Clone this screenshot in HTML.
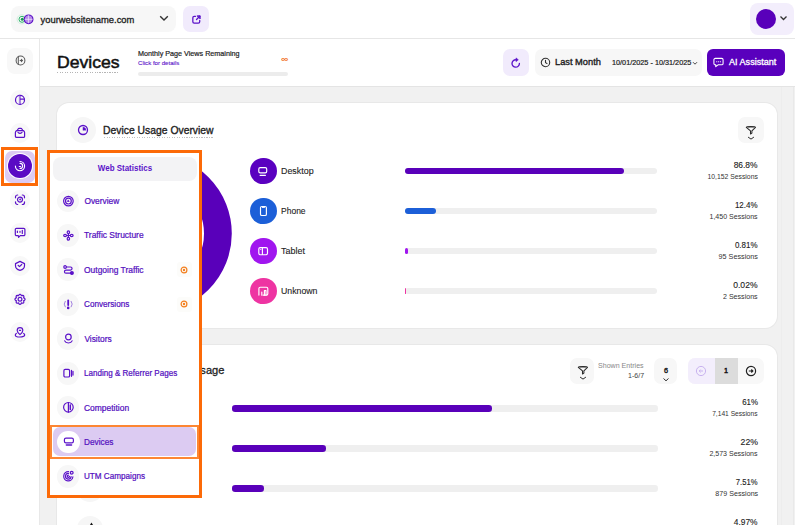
<!DOCTYPE html>
<html><head><meta charset="utf-8">
<style>
*{margin:0;padding:0;box-sizing:border-box}
html,body{width:795px;height:525px;overflow:hidden;background:#fff;font-family:"Liberation Sans",sans-serif;color:#222}
.a{position:absolute}
.t{white-space:nowrap}
svg{display:block}
</style></head><body>
<div class="a" style="left:0px;top:0px;width:795px;height:39px;background:#fff;border-radius:0px;border-bottom:1px solid #e6e6e6"></div>
<div class="a" style="left:11px;top:6px;width:165px;height:26px;background:#f7f7f7;border-radius:8px;"></div>
<svg class="a" style="left:14px;top:12px" width="22" height="15" viewBox="0 0 22 15"><circle cx="7.7" cy="7.3" r="4.6" fill="none" stroke="#d3efdf" stroke-width="1"/><circle cx="8" cy="7.3" r="3" fill="none" stroke="#2db56c" stroke-width="1"/><circle cx="8.3" cy="7.2" r="1.5" fill="#12994c"/><circle cx="14.6" cy="7.3" r="4.3" fill="#b58ae8" stroke="#5a0fc6" stroke-width="1.2"/><path d="M14.4 3.3v8M10.6 7.3h8" stroke="#eee4fb" stroke-width=".8"/></svg>
<div class="a t" style="left:40.60px;top:15.00px;font-size:9.4px;line-height:9.4px;font-weight:normal;color:#222;-webkit-text-stroke:0.3px #222;">yourwebsitename.com</div>
<svg class="a" style="left:158px;top:14px" width="12" height="9" viewBox="0 0 12 9"><path d="M2.2 2.2l3.8 3.8 3.8-3.8" fill="none" stroke="#333" stroke-width="1.4"/></svg>
<div class="a" style="left:183px;top:6px;width:26px;height:26px;background:#f1ebfc;border-radius:7px;"></div>
<svg class="a" style="left:190.5px;top:13.5px" width="11" height="11" viewBox="0 0 12 12" fill="none" stroke="#5b12c9" stroke-width="1.4" stroke-linecap="round" stroke-linejoin="round"><path d="M5 2.5H3.5a1.5 1.5 0 0 0-1.5 1.5v4.5A1.5 1.5 0 0 0 3.5 10H8a1.5 1.5 0 0 0 1.5-1.5V7M6 6l3.6-3.6"/><path d="M7 2h3v3z" fill="#5b12c9" stroke-width="1"/></svg>
<div class="a" style="left:750px;top:3px;width:44px;height:32px;background:#f3eefc;border-radius:8px;"></div>
<div class="a" style="left:756px;top:9px;width:20px;height:20px;background:#5900ba;border-radius:10px;"></div>
<svg class="a" style="left:779px;top:15px" width="9" height="7" viewBox="0 0 9 7"><path d="M1.5 1.5l3 3 3-3" fill="none" stroke="#333" stroke-width="1.3"/></svg>
<div class="a" style="left:0px;top:39px;width:40px;height:486px;background:#fff;border-radius:0px;border-right:1px solid #e8e8e8"></div>
<div class="a" style="left:7px;top:48px;width:26px;height:26px;background:#f8f8f8;border-radius:8px;"></div>
<svg class="a" style="left:14.5px;top:55.0px" width="11" height="11" viewBox="0 0 12 12" fill="none" stroke="#555" stroke-width="1.1" stroke-linecap="round" stroke-linejoin="round"><circle cx="6" cy="6" r="4.8"/><path d="M3.6 1.8v8.4M5.6 6h2.6M6.9 4.7L8.2 6 6.9 7.3"/></svg>
<div class="a" style="left:10px;top:90px;width:20px;height:20px;background:#f8f8f8;border-radius:10px;"></div>
<svg class="a" style="left:11px;top:91px" width="18" height="18" viewBox="0 0 18 18" fill="none" stroke="#5b12c9" stroke-width="1.2" stroke-linecap="round" stroke-linejoin="round"><circle cx="9" cy="8.9" r="4.5"/><path d="M8.9 4.4v9M8.9 8.2h4.5"/><path d="M8.3 5v7.8" stroke-width=".8" stroke="#b9a0ea"/></svg>
<div class="a" style="left:10px;top:122.6px;width:20px;height:20px;background:#f8f8f8;border-radius:10px;"></div>
<svg class="a" style="left:11px;top:124px" width="18" height="18" viewBox="0 0 18 18" fill="none" stroke="#5b12c9" stroke-width="1.2" stroke-linecap="round" stroke-linejoin="round"><path d="M4.4 8.6v3.6a1.1 1.1 0 0 0 1.1 1.1h7a1.1 1.1 0 0 0 1.1-1.1V8.6c0-1-.6-1.7-1.4-2H5.8c-.8.3-1.4 1-1.4 2z"/><path d="M6.2 6.6l1-1.8a.9.9 0 0 1 .8-.5h2a.9.9 0 0 1 .8.5l1 1.8"/><path d="M7 8.3q2 2 4 0"/></svg>
<div class="a" style="left:10px;top:189.6px;width:20px;height:20px;background:#f8f8f8;border-radius:10px;"></div>
<svg class="a" style="left:11px;top:191px" width="18" height="18" viewBox="0 0 18 18" fill="none" stroke="#5b12c9" stroke-width="1.2" stroke-linecap="round" stroke-linejoin="round"><path d="M4.5 6.8V6a2 2 0 0 1 2-2h.2M11.3 4h.2a2 2 0 0 1 2 2v.8M13.5 10.8v.7a2 2 0 0 1-2 2h-.2M6.7 13.5h-.2a2 2 0 0 1-2-2v-.7"/><circle cx="9" cy="8.6" r="2.5"/><circle cx="9.2" cy="8.4" r=".35" fill="#5b12c9"/></svg>
<div class="a" style="left:10px;top:222.5px;width:20px;height:20px;background:#f8f8f8;border-radius:10px;"></div>
<svg class="a" style="left:11px;top:224px" width="18" height="18" viewBox="0 0 18 18" fill="none" stroke="#5b12c9" stroke-width="1.2" stroke-linecap="round" stroke-linejoin="round"><path d="M5.5 4.3h7.2a1.2 1.2 0 0 1 1.2 1.2v5a1.2 1.2 0 0 1-1.2 1.2H9.2l-1.6 1.6-.3-1.6H5.5a1.2 1.2 0 0 1-1.2-1.2v-5a1.2 1.2 0 0 1 1.2-1.2z"/><path d="M6.4 7.2v1.2M9 7.4v.9M11.3 6.3v3.2"/></svg>
<div class="a" style="left:10px;top:255.5px;width:20px;height:20px;background:#f8f8f8;border-radius:10px;"></div>
<svg class="a" style="left:11px;top:257px" width="18" height="18" viewBox="0 0 18 18" fill="none" stroke="#5b12c9" stroke-width="1.2" stroke-linecap="round" stroke-linejoin="round"><path d="M9 4.4l4.5 2.2v2.2c0 2.3-2 4-4.5 4.5-2.5-.5-4.5-2.2-4.5-4.5V6.6z"/><path d="M7.1 8.3l1.4 1.3 2.2-2.1"/></svg>
<div class="a" style="left:10px;top:289px;width:20px;height:20px;background:#f8f8f8;border-radius:10px;"></div>
<svg class="a" style="left:11px;top:290px" width="18" height="18" viewBox="0 0 18 18" fill="none" stroke="#5b12c9" stroke-width="1.2" stroke-linecap="round" stroke-linejoin="round"><circle cx="9" cy="9.3" r="1.9"/><path d="M9.00 4.20 L9.92 4.69 L10.49 5.70 L11.61 5.39 L12.61 5.69 L12.91 6.69 L12.60 7.81 L13.61 8.38 L14.10 9.30 L13.61 10.22 L12.60 10.79 L12.91 11.91 L12.61 12.91 L11.61 13.21 L10.49 12.90 L9.92 13.91 L9.00 14.40 L8.08 13.91 L7.51 12.90 L6.39 13.21 L5.39 12.91 L5.09 11.91 L5.40 10.79 L4.39 10.22 L3.90 9.30 L4.39 8.38 L5.40 7.81 L5.09 6.69 L5.39 5.69 L6.39 5.39 L7.51 5.70 L8.08 4.69z"/></svg>
<div class="a" style="left:10px;top:322px;width:20px;height:20px;background:#f8f8f8;border-radius:10px;"></div>
<svg class="a" style="left:11px;top:323px" width="18" height="18" viewBox="0 0 18 18" fill="none" stroke="#5b12c9" stroke-width="1.2" stroke-linecap="round" stroke-linejoin="round"><path d="M9 11.6c-1.8-1.5-2.8-2.8-2.8-4.1a2.8 2.8 0 0 1 5.6 0c0 1.3-1 2.6-2.8 4.1z"/><path d="M8.4 7.3h1.2"/><path d="M5.3 10.4c-.7.5-1 1-1 1.5 0 1.2 2.1 2.1 4.7 2.1s4.7-.9 4.7-2.1c0-.5-.3-1-1-1.5"/></svg>
<div class="a" style="left:1px;top:147px;width:37px;height:38.5px;border:3px solid #fc6a08"></div>
<div class="a" style="left:5px;top:150.5px;width:30px;height:32px;background:#dccbf2;border-radius:7px;"></div>
<div class="a" style="left:7.5px;top:153.8px;width:24.6px;height:24.6px;border-radius:50%;background:#5a0bc4;box-shadow:0 0 0 1px #fff"></div>
<svg class="a" style="left:11px;top:157px" width="18" height="18" viewBox="0 0 18 18" fill="none" stroke="#fff" stroke-width="1.15" stroke-linecap="round" stroke-linejoin="round"><path d="M9 4.5a4.6 4.6 0 1 1-4.6 4.6"/><path d="M9.1 6.4a2.5 2.5 0 0 1 0 5"/><path d="M8.3 9.5h1.2"/></svg>
<div class="a" style="left:40px;top:39px;width:755px;height:48px;background:#fff;border-radius:0px;border-bottom:1px solid #e4e4e4"></div>
<div class="a t" style="left:56.60px;top:55.00px;font-size:16.8px;line-height:16.8px;font-weight:normal;color:#111;transform:scaleX(1.0488);transform-origin:left;-webkit-text-stroke:0.5px #111;">Devices</div>
<div class="a" style="left:57px;top:72px;width:62px;height:1px;background:repeating-linear-gradient(90deg,#b5b5b5 0 1px,transparent 1px 2.5px)"></div>
<div class="a t" style="left:137.60px;top:50.00px;font-size:7.4px;line-height:7.4px;font-weight:normal;color:#222;transform:scaleX(0.9749);transform-origin:left;-webkit-text-stroke:0.2px #222;">Monthly Page Views Remaining</div>
<div class="a t" style="left:137.60px;top:60.00px;font-size:6.2px;line-height:6.2px;font-weight:normal;color:#5b12c9;transform:scaleX(0.9844);transform-origin:left;-webkit-text-stroke:0.1px #5b12c9;">Click for details</div>
<div class="a t" style="left:280.60px;top:55.00px;font-size:9px;line-height:9px;font-weight:bold;color:#f2701e;transform:scaleX(1.1367);transform-origin:left;">&#8734;</div>
<div class="a" style="left:138px;top:72px;width:150px;height:4px;background:#ececec;border-radius:2px;"></div>
<div class="a" style="left:503px;top:49px;width:26px;height:27px;background:#f1ebfc;border-radius:7px;"></div>
<svg class="a" style="left:506px;top:53px" width="20" height="20" viewBox="0 0 20 20"><path d="M13.4 10.5A3.7 3.7 0 1 1 9.9 6.8" fill="none" stroke="#5b12c9" stroke-width="1.35" stroke-linecap="round"/><path d="M10 4.9L12.3 6.8 10 8.6z" fill="#5b12c9" stroke="#5b12c9" stroke-width=".6" stroke-linejoin="round"/></svg>
<div class="a" style="left:535px;top:49px;width:167px;height:27px;background:#f7f7f7;border-radius:7px;"></div>
<svg class="a" style="left:540.0px;top:57.0px" width="11" height="11" viewBox="0 0 12 12" fill="none" stroke="#333" stroke-width="1.2" stroke-linecap="round" stroke-linejoin="round"><circle cx="6" cy="6" r="4.6"/><path d="M6 3.5v2.6l1.6 1"/></svg>
<div class="a t" style="left:555.30px;top:58.00px;font-size:9px;line-height:9px;font-weight:normal;color:#222;transform:scaleX(1.0307);transform-origin:left;-webkit-text-stroke:0.35px #222;">Last Month</div>
<div class="a t" style="left:611.90px;top:59.00px;font-size:7.2px;line-height:7.2px;font-weight:normal;color:#222;transform:scaleX(1.0122);transform-origin:left;-webkit-text-stroke:0.2px #222;">10/01/2025 - 10/31/2025</div>
<svg class="a" style="left:692px;top:61px" width="6" height="5" viewBox="0 0 6 5"><path d="M1 1.2l2 2 2-2" fill="none" stroke="#333" stroke-width="0.9"/></svg>
<div class="a" style="left:707px;top:49px;width:78px;height:26.5px;background:#5900bd;border-radius:6px;"></div>
<svg class="a" style="left:712.9px;top:57.1px" width="11" height="11" viewBox="0 0 12 12" fill="none" stroke="#fff" stroke-width="1.15" stroke-linecap="round" stroke-linejoin="round"><path d="M2.5 1.5h7a1.5 1.5 0 0 1 1.5 1.5v4A1.5 1.5 0 0 1 9.5 8.5H5.5L3 10.5v-2h-.5A1.5 1.5 0 0 1 1 7V3a1.5 1.5 0 0 1 1.5-1.5z"/><path d="M4 5.2h.2M6 5.2h.2M8 5.2h.2"/></svg>
<div class="a t" style="left:729.00px;top:58.00px;font-size:8.7px;line-height:8.7px;font-weight:normal;color:#fff;transform:scaleX(1.0421);transform-origin:left;-webkit-text-stroke:0.3px #fff;">AI Assistant</div>
<div class="a" style="left:40px;top:87px;width:755px;height:438px;background:#f1f1f1;border-radius:0px;"></div>
<div class="a" style="left:780.5px;top:87px;width:1px;height:438px;background:#ededed;border-radius:0px;"></div>
<div class="a" style="left:793px;top:87px;width:1px;height:438px;background:#e9e9e9;border-radius:0px;"></div>
<div class="a" style="left:57px;top:103px;width:720px;height:225px;background:#fff;border-radius:12px;box-shadow:0 0 0 1px #e8e8e8"></div>
<div class="a" style="left:70px;top:117px;width:26px;height:26px;background:#f6f6f6;border-radius:13px;"></div>
<svg class="a" style="left:77.4px;top:124.0px" width="12" height="12" viewBox="0 0 12 12" fill="none" stroke="#5b12c9" stroke-width="1.3" stroke-linecap="round" stroke-linejoin="round"><circle cx="6" cy="6" r="4.5"/><path d="M6 6V3.2a2.8 2.8 0 0 1 2.8 2.8z" fill="#5b12c9" stroke-width=".5"/></svg>
<div class="a t" style="left:103.20px;top:125.00px;font-size:11.1px;line-height:11.1px;font-weight:normal;color:#222;transform:scaleX(0.9343);transform-origin:left;-webkit-text-stroke:0.35px #222;">Device Usage Overview</div>
<div class="a" style="left:104px;top:137px;width:110px;height:1px;background:repeating-linear-gradient(90deg,#c0c0c0 0 1px,transparent 1px 2.5px)"></div>
<div class="a" style="left:738px;top:117px;width:26px;height:26px;background:#f7f7f7;border-radius:7px;"></div>
<svg class="a" style="left:742px;top:121px" width="18" height="20" viewBox="0 0 18 20" fill="none" stroke="#2a2a2a" stroke-width="1.2" stroke-linecap="round" stroke-linejoin="round"><ellipse cx="8.9" cy="6.2" rx="3.4" ry=".9" fill="#9a9a9a" stroke="none"/><path d="M4.3 6.3c0-1.2 9.2-1.2 9.2 0L9.9 9.9v2.2l-1.4.9V9.9z" stroke-width="1.05"/><path d="M6.4 16.3L9 18.1l2.6-1.8" stroke-width="1"/></svg>
<svg class="a" style="left:57px;top:140px" width="180" height="190" viewBox="57 140 180 190"><circle cx="152.3" cy="233.5" r="65.6" fill="none" stroke="#5900ba" stroke-width="27.8"/></svg>
<div class="a" style="left:250px;top:157.7px;width:26.7px;height:26.7px;background:#5a00c0;border-radius:14px;"></div>
<svg class="a" style="left:248px;top:156px" width="30" height="30" viewBox="0 0 30 30" fill="none" stroke="#fff" stroke-width="1.15" stroke-linecap="round" stroke-linejoin="round"><rect x="10.8" y="11.6" width="7.9" height="5.2" rx="1.4"/><path d="M12.1 19.3h5.3" stroke-width="1.2"/></svg>
<div class="a t" style="left:280.80px;top:167.00px;font-size:8.4px;line-height:8.4px;font-weight:normal;color:#222;transform:scaleX(1.0607);transform-origin:left;-webkit-text-stroke:0.1px #222;">Desktop</div>
<div class="a" style="left:405px;top:167.8px;width:252px;height:6.4px;background:#efefef;border-radius:3.2px;"></div>
<div class="a" style="left:405px;top:167.8px;width:219px;height:6.4px;background:#5900ba;border-radius:3.2px;"></div>
<div class="a t" style="left:732.27px;top:161.00px;font-size:9px;line-height:9px;font-weight:normal;color:#222;transform:scaleX(0.9361);transform-origin:right;-webkit-text-stroke:0.12px #222;">86.8%</div>
<div class="a t" style="left:700.96px;top:173.00px;font-size:7.7px;line-height:7.7px;font-weight:normal;color:#333;transform:scaleX(0.8866);transform-origin:right;">10,152 Sessions</div>
<div class="a" style="left:250px;top:197.7px;width:26.7px;height:26.7px;background:#1c5fd8;border-radius:14px;"></div>
<svg class="a" style="left:248px;top:196px" width="30" height="30" viewBox="0 0 30 30" fill="none" stroke="#fff" stroke-width="1.15" stroke-linecap="round" stroke-linejoin="round"><rect x="12.5" y="10.5" width="5.9" height="9" rx="1.3"/><path d="M14.4 11.4h2.1" stroke-width="1"/></svg>
<div class="a t" style="left:280.80px;top:207.00px;font-size:8.4px;line-height:8.4px;font-weight:normal;color:#222;transform:scaleX(1.0157);transform-origin:left;-webkit-text-stroke:0.1px #222;">Phone</div>
<div class="a" style="left:405px;top:207.8px;width:252px;height:6.4px;background:#efefef;border-radius:3.2px;"></div>
<div class="a" style="left:405px;top:207.8px;width:31px;height:6.4px;background:#1c5fd8;border-radius:3.2px;"></div>
<div class="a t" style="left:732.27px;top:201.00px;font-size:9px;line-height:9px;font-weight:normal;color:#222;transform:scaleX(0.8852);transform-origin:right;-webkit-text-stroke:0.12px #222;">12.4%</div>
<div class="a t" style="left:705.22px;top:213.00px;font-size:7.7px;line-height:7.7px;font-weight:normal;color:#333;transform:scaleX(0.9148);transform-origin:right;">1,450 Sessions</div>
<div class="a" style="left:250px;top:237.7px;width:26.7px;height:26.7px;background:#a016ef;border-radius:14px;"></div>
<svg class="a" style="left:248px;top:236px" width="30" height="30" viewBox="0 0 30 30" fill="none" stroke="#fff" stroke-width="1.15" stroke-linecap="round" stroke-linejoin="round"><rect x="10.8" y="11.6" width="8.7" height="7.1" rx="1.4"/><path d="M14.4 12v6.3"/><path d="M12.8 13.3v.1" stroke-width="1.1"/></svg>
<div class="a t" style="left:280.80px;top:247.00px;font-size:8.4px;line-height:8.4px;font-weight:normal;color:#222;transform:scaleX(1.0689);transform-origin:left;-webkit-text-stroke:0.1px #222;">Tablet</div>
<div class="a" style="left:405px;top:247.8px;width:252px;height:6.4px;background:#efefef;border-radius:3.2px;"></div>
<div class="a" style="left:405px;top:247.8px;width:3px;height:6.4px;background:#a016ef;border-radius:3.2px;"></div>
<div class="a t" style="left:732.27px;top:241.00px;font-size:9px;line-height:9px;font-weight:normal;color:#222;transform:scaleX(0.8852);transform-origin:right;-webkit-text-stroke:0.12px #222;">0.81%</div>
<div class="a t" style="left:715.91px;top:253.00px;font-size:7.7px;line-height:7.7px;font-weight:normal;color:#333;transform:scaleX(0.9382);transform-origin:right;">95 Sessions</div>
<div class="a" style="left:250px;top:277.7px;width:26.7px;height:26.7px;background:#ee34a2;border-radius:14px;"></div>
<svg class="a" style="left:248px;top:276px" width="30" height="30" viewBox="0 0 30 30" fill="none" stroke="#fff" stroke-width="1.15" stroke-linecap="round" stroke-linejoin="round"><path d="M10.9 19.1V12.6a1.4 1.4 0 0 1 1.4-1.4h6.1a1.4 1.4 0 0 1 1.4 1.4v5.1a1.4 1.4 0 0 1-1.4 1.4H15"/><path d="M13.8 19.2v-3.2M16.4 19.2v-4.6h1.6v4.6"/></svg>
<div class="a t" style="left:280.80px;top:287.00px;font-size:8.4px;line-height:8.4px;font-weight:normal;color:#222;transform:scaleX(1.0423);transform-origin:left;-webkit-text-stroke:0.1px #222;">Unknown</div>
<div class="a" style="left:405px;top:287.8px;width:252px;height:6.4px;background:#efefef;border-radius:3.2px;"></div>
<div class="a" style="left:405px;top:287.8px;width:1px;height:6.4px;background:#ee34a2;border-radius:3.2px;"></div>
<div class="a t" style="left:732.27px;top:281.00px;font-size:9px;line-height:9px;font-weight:normal;color:#222;transform:scaleX(0.9518);transform-origin:right;-webkit-text-stroke:0.12px #222;">0.02%</div>
<div class="a t" style="left:720.19px;top:293.00px;font-size:7.7px;line-height:7.7px;font-weight:normal;color:#333;transform:scaleX(0.9200);transform-origin:right;">2 Sessions</div>
<div class="a" style="left:57px;top:345px;width:720px;height:200px;background:#fff;border-radius:12px;box-shadow:0 0 0 1px #e8e8e8"></div>
<div class="a t" style="left:111.57px;top:365.00px;font-size:11.1px;line-height:11.1px;font-weight:normal;color:#222;-webkit-text-stroke:0.3px #222;">Browser Device Usage</div>
<div class="a" style="left:570px;top:358px;width:24px;height:26px;background:#f7f7f7;border-radius:7px;"></div>
<svg class="a" style="left:573.6px;top:361.3px" width="18" height="20" viewBox="0 0 18 20" fill="none" stroke="#2a2a2a" stroke-width="1.2" stroke-linecap="round" stroke-linejoin="round"><ellipse cx="8.9" cy="6.2" rx="3.4" ry=".9" fill="#9a9a9a" stroke="none"/><path d="M4.3 6.3c0-1.2 9.2-1.2 9.2 0L9.9 9.9v2.2l-1.4.9V9.9z" stroke-width="1.05"/><path d="M6.4 16.3L9 18.1l2.6-1.8" stroke-width="1"/></svg>
<div class="a t" style="left:598.10px;top:362.00px;font-size:7px;line-height:7px;font-weight:normal;color:#888;transform:scaleX(1.0102);transform-origin:left;">Shown Entries</div>
<div class="a t" style="left:626.79px;top:372.00px;font-size:7.5px;line-height:7.5px;font-weight:normal;color:#444;transform:scaleX(0.9410);transform-origin:right;">1-6/7</div>
<div class="a" style="left:654px;top:358px;width:23px;height:26px;background:#f7f7f7;border-radius:7px;"></div>
<div class="a t" style="left:663.97px;top:367.00px;font-size:7.3px;line-height:7.3px;font-weight:normal;color:#222;-webkit-text-stroke:0.4px #222;">6</div>
<svg class="a" style="left:662px;top:377px" width="8" height="6" viewBox="0 0 8 6"><path d="M1.5 1.5l2.5 2.3 2.5-2.3" fill="none" stroke="#333" stroke-width="1"/></svg>
<div class="a" style="left:688px;top:358px;width:76px;height:26px;background:#f8f8f8;border-radius:7px;overflow:hidden"><div class="a" style="left:0;top:0;width:26.5px;height:26px;background:#f3eefc"></div><div class="a" style="left:26.5px;top:0;width:23px;height:26px;background:#dcdcdc"></div></div>
<svg class="a" style="left:695px;top:365px" width="12" height="12" viewBox="0 0 12 12"><circle cx="6" cy="6" r="4.6" fill="none" stroke="#c9b3ef" stroke-width="1"/><path d="M8 6H4.3M5.6 4.6L4.2 6l1.4 1.4" fill="none" stroke="#c9b3ef" stroke-width="1"/></svg>
<div class="a t" style="left:723.97px;top:367.00px;font-size:7.3px;line-height:7.3px;font-weight:normal;color:#111;-webkit-text-stroke:0.45px #111;">1</div>
<svg class="a" style="left:745px;top:365px" width="12" height="12" viewBox="0 0 12 12"><circle cx="6" cy="6" r="4.6" fill="none" stroke="#222" stroke-width="1.2"/><path d="M3.8 6h3.8M6.3 4.5L7.8 6 6.3 7.5" fill="none" stroke="#222" stroke-width="1.2"/></svg>
<div class="a" style="left:77px;top:395.5px;width:26px;height:26px;background:#f6f6f6;border-radius:13px;"></div>
<div class="a" style="left:232px;top:405.3px;width:426px;height:6.4px;background:#efefef;border-radius:3.2px;"></div>
<div class="a" style="left:232px;top:405.3px;width:260px;height:6.4px;background:#5900ba;border-radius:3.2px;"></div>
<div class="a t" style="left:739.78px;top:398.00px;font-size:9px;line-height:9px;font-weight:normal;color:#222;transform:scaleX(0.8770);transform-origin:right;-webkit-text-stroke:0.12px #222;">61%</div>
<div class="a t" style="left:705.22px;top:410.00px;font-size:7.7px;line-height:7.7px;font-weight:normal;color:#333;transform:scaleX(0.8635);transform-origin:right;">7,141 Sessions</div>
<div class="a" style="left:77px;top:435.5px;width:26px;height:26px;background:#f6f6f6;border-radius:13px;"></div>
<div class="a" style="left:232px;top:445.3px;width:426px;height:6.4px;background:#efefef;border-radius:3.2px;"></div>
<div class="a" style="left:232px;top:445.3px;width:94px;height:6.4px;background:#5900ba;border-radius:3.2px;"></div>
<div class="a t" style="left:739.78px;top:438.00px;font-size:9px;line-height:9px;font-weight:normal;color:#222;transform:scaleX(0.9658);transform-origin:right;-webkit-text-stroke:0.12px #222;">22%</div>
<div class="a t" style="left:705.22px;top:450.00px;font-size:7.7px;line-height:7.7px;font-weight:normal;color:#333;transform:scaleX(0.9167);transform-origin:right;">2,573 Sessions</div>
<div class="a" style="left:77px;top:475.5px;width:26px;height:26px;background:#f6f6f6;border-radius:13px;"></div>
<div class="a" style="left:232px;top:485.3px;width:426px;height:6.4px;background:#efefef;border-radius:3.2px;"></div>
<div class="a" style="left:232px;top:485.3px;width:32px;height:6.4px;background:#5900ba;border-radius:3.2px;"></div>
<div class="a t" style="left:732.27px;top:478.00px;font-size:9px;line-height:9px;font-weight:normal;color:#222;transform:scaleX(0.8499);transform-origin:right;-webkit-text-stroke:0.12px #222;">7.51%</div>
<div class="a t" style="left:711.64px;top:490.00px;font-size:7.7px;line-height:7.7px;font-weight:normal;color:#333;transform:scaleX(0.9273);transform-origin:right;">879 Sessions</div>
<div class="a" style="left:77px;top:515.5px;width:26px;height:26px;background:#f6f6f6;border-radius:13px;"></div>
<div class="a" style="left:232px;top:525.3px;width:426px;height:6.4px;background:#efefef;border-radius:3.2px;"></div>
<div class="a" style="left:232px;top:525.3px;width:21px;height:6.4px;background:#5900ba;border-radius:3.2px;"></div>
<div class="a t" style="left:732.27px;top:518.00px;font-size:9px;line-height:9px;font-weight:normal;color:#222;transform:scaleX(0.9322);transform-origin:right;-webkit-text-stroke:0.12px #222;">4.97%</div>
<svg class="a" style="left:86px;top:520px" width="11" height="5" viewBox="0 0 11 5"><path d="M5.4 2.5L4 5h3z" fill="#111"/></svg>
<div class="a" style="left:47px;top:150px;width:155px;height:348px;border:3px solid #fc6a08;background:#fff"></div>
<div class="a" style="left:53px;top:157px;width:143.5px;height:24px;background:#f3f3f5;border-radius:8px;"></div>
<div class="a t" style="left:95.52px;top:164.00px;font-size:8.5px;line-height:8.5px;font-weight:bold;color:#5b12c9;transform:scaleX(0.9370);transform-origin:center;">Web Statistics</div>
<div class="a" style="left:56.6px;top:189.6px;width:22.8px;height:22.8px;background:#f7f7f7;border-radius:11.4px;"></div>
<svg class="a" style="left:60px;top:192px" width="18" height="18" viewBox="0 0 18 18" fill="none" stroke="#5b12c9" stroke-width="1.2" stroke-linecap="round" stroke-linejoin="round"><circle cx="8.4" cy="9.1" r="4.8"/><circle cx="8.4" cy="9.1" r="2.9"/><path d="M8.4 8.2l.8 1.3H7.6z" fill="#5b12c9" stroke-width=".7"/></svg>
<div class="a t" style="left:84.40px;top:197.00px;font-size:8.4px;line-height:8.4px;font-weight:normal;color:#5410c0;-webkit-text-stroke:0.22px #5410c0;">Overview</div>
<div class="a" style="left:56.6px;top:223.9px;width:22.8px;height:22.8px;background:#f7f7f7;border-radius:11.4px;"></div>
<svg class="a" style="left:60px;top:226px" width="18" height="18" viewBox="0 0 18 18" fill="none" stroke="#5b12c9" stroke-width="1.2" stroke-linecap="round" stroke-linejoin="round"><ellipse cx="8.4" cy="6.2" rx="1.2" ry="1.4"/><ellipse cx="8.4" cy="12.8" rx="1.2" ry="1.4"/><ellipse cx="5.1" cy="9.5" rx="1.4" ry="1.2"/><ellipse cx="11.7" cy="9.5" rx="1.4" ry="1.2"/><path d="M8.4 7.6v3.8M6.5 9.5h3.8"/></svg>
<div class="a t" style="left:84.40px;top:231.00px;font-size:8.4px;line-height:8.4px;font-weight:normal;color:#5410c0;transform:scaleX(1.0083);transform-origin:left;-webkit-text-stroke:0.22px #5410c0;">Traffic Structure</div>
<div class="a" style="left:56.6px;top:258.40000000000003px;width:22.8px;height:22.8px;background:#f7f7f7;border-radius:11.4px;"></div>
<svg class="a" style="left:60px;top:261px" width="18" height="18" viewBox="0 0 18 18" fill="none" stroke="#5b12c9" stroke-width="1.2" stroke-linecap="round" stroke-linejoin="round"><circle cx="5.1" cy="6" r="1.3"/><path d="M6.4 6h4.1a1.55 1.55 0 0 1 0 3.1H6a1.55 1.55 0 0 0 0 3.1h5"/><circle cx="11.9" cy="12.1" r="1.4" fill="#5b12c9"/></svg>
<div class="a t" style="left:84.40px;top:266.00px;font-size:8.4px;line-height:8.4px;font-weight:normal;color:#5410c0;transform:scaleX(1.0107);transform-origin:left;-webkit-text-stroke:0.22px #5410c0;">Outgoing Traffic</div>
<div class="a" style="left:176.5px;top:262.3px;width:15px;height:15px;background:#fcfcfa;border-radius:3px;"></div>
<svg class="a" style="left:180.3px;top:265.8px" width="8" height="8" viewBox="0 0 8 8"><circle cx="4" cy="4" r="2.9" fill="none" stroke="#f4801f" stroke-width="1.2"/><circle cx="4" cy="4" r="1.2" fill="#f4801f"/></svg>
<div class="a" style="left:56.6px;top:292.90000000000003px;width:22.8px;height:22.8px;background:#f7f7f7;border-radius:11.4px;"></div>
<svg class="a" style="left:60px;top:295px" width="18" height="18" viewBox="0 0 18 18" fill="none" stroke="#5b12c9" stroke-width="1.2" stroke-linecap="round" stroke-linejoin="round"><path d="M8.2 5.4v4.6" stroke-width="1.8"/><circle cx="8.2" cy="12.9" r=".7" fill="#5b12c9"/><path d="M5.2 6.3a4.5 4.5 0 0 0 0 5.6M11.2 6.3a4.5 4.5 0 0 1 0 5.6" stroke="#a27fe0" stroke-width="1"/></svg>
<div class="a t" style="left:84.40px;top:300.00px;font-size:8.4px;line-height:8.4px;font-weight:normal;color:#5410c0;transform:scaleX(0.9729);transform-origin:left;-webkit-text-stroke:0.22px #5410c0;">Conversions</div>
<div class="a" style="left:176.5px;top:296.8px;width:15px;height:15px;background:#fcfcfa;border-radius:3px;"></div>
<svg class="a" style="left:180.3px;top:300.3px" width="8" height="8" viewBox="0 0 8 8"><circle cx="4" cy="4" r="2.9" fill="none" stroke="#f4801f" stroke-width="1.2"/><circle cx="4" cy="4" r="1.2" fill="#f4801f"/></svg>
<div class="a" style="left:56.6px;top:327.3px;width:22.8px;height:22.8px;background:#f7f7f7;border-radius:11.4px;"></div>
<svg class="a" style="left:60px;top:330px" width="18" height="18" viewBox="0 0 18 18" fill="none" stroke="#5b12c9" stroke-width="1.2" stroke-linecap="round" stroke-linejoin="round"><circle cx="8.4" cy="7" r="2.8"/><path d="M4.7 10.9c1 2.8 6.4 2.8 7.4 0"/></svg>
<div class="a t" style="left:84.40px;top:335.00px;font-size:8.4px;line-height:8.4px;font-weight:normal;color:#5410c0;-webkit-text-stroke:0.22px #5410c0;">Visitors</div>
<div class="a" style="left:56.6px;top:361.8px;width:22.8px;height:22.8px;background:#f7f7f7;border-radius:11.4px;"></div>
<svg class="a" style="left:60px;top:364px" width="18" height="18" viewBox="0 0 18 18" fill="none" stroke="#5b12c9" stroke-width="1.2" stroke-linecap="round" stroke-linejoin="round"><rect x="3.9" y="5.4" width="5.7" height="7.6" rx="1.3"/><path d="M11.5 6.3v6M13 7.3v3.8"/></svg>
<div class="a t" style="left:84.40px;top:369.00px;font-size:8.4px;line-height:8.4px;font-weight:normal;color:#5410c0;transform:scaleX(0.9624);transform-origin:left;-webkit-text-stroke:0.22px #5410c0;">Landing &amp; Referrer Pages</div>
<div class="a" style="left:56.6px;top:396.20000000000005px;width:22.8px;height:22.8px;background:#f7f7f7;border-radius:11.4px;"></div>
<svg class="a" style="left:60px;top:398px" width="18" height="18" viewBox="0 0 18 18" fill="none" stroke="#5b12c9" stroke-width="1.2" stroke-linecap="round" stroke-linejoin="round"><circle cx="8.4" cy="9.3" r="4.8"/><path d="M8.4 4.5v9.6"/><path d="M10.3 7v4.4" stroke-width="1.5"/></svg>
<div class="a t" style="left:84.40px;top:404.00px;font-size:8.4px;line-height:8.4px;font-weight:normal;color:#5410c0;transform:scaleX(1.0089);transform-origin:left;-webkit-text-stroke:0.22px #5410c0;">Competition</div>
<div class="a" style="left:50px;top:425px;width:148.5px;height:33.5px;border:2px solid #fd8633"></div>
<div class="a" style="left:52.6px;top:427px;width:143.7px;height:28.8px;background:#dccbf2;border-radius:7px;"></div>
<div class="a" style="left:57.2px;top:430.8px;width:22.4px;height:22.4px;background:#fff;border-radius:11.2px;"></div>
<svg class="a" style="left:60px;top:433px" width="18" height="18" viewBox="0 0 18 18" fill="none" stroke="#5b12c9" stroke-width="1.2" stroke-linecap="round" stroke-linejoin="round"><rect x="4.4" y="5.1" width="9" height="4.7" rx="1.6"/><path d="M6.3 12h5.3" stroke-width="1.4"/></svg>
<div class="a t" style="left:84.40px;top:438.00px;font-size:8.4px;line-height:8.4px;font-weight:normal;color:#5410c0;transform:scaleX(0.9867);transform-origin:left;-webkit-text-stroke:0.22px #5410c0;">Devices</div>
<div class="a" style="left:56.6px;top:464.8px;width:22.8px;height:22.8px;background:#f7f7f7;border-radius:11.4px;"></div>
<svg class="a" style="left:60px;top:467px" width="18" height="18" viewBox="0 0 18 18" fill="none" stroke="#5b12c9" stroke-width="1.2" stroke-linecap="round" stroke-linejoin="round"><path d="M12.9 9.8A4.6 4.6 0 1 1 8.6 4.7"/><path d="M11.1 9.6A2.8 2.8 0 1 1 8.6 6.5"/><path d="M9.5 9.4A1.1 1.1 0 1 1 8.4 8.2"/><circle cx="11.7" cy="5.7" r="1.4"/></svg>
<div class="a t" style="left:84.40px;top:472.00px;font-size:8.4px;line-height:8.4px;font-weight:normal;color:#5410c0;transform:scaleX(0.9707);transform-origin:left;-webkit-text-stroke:0.22px #5410c0;">UTM Campaigns</div>
</body></html>
